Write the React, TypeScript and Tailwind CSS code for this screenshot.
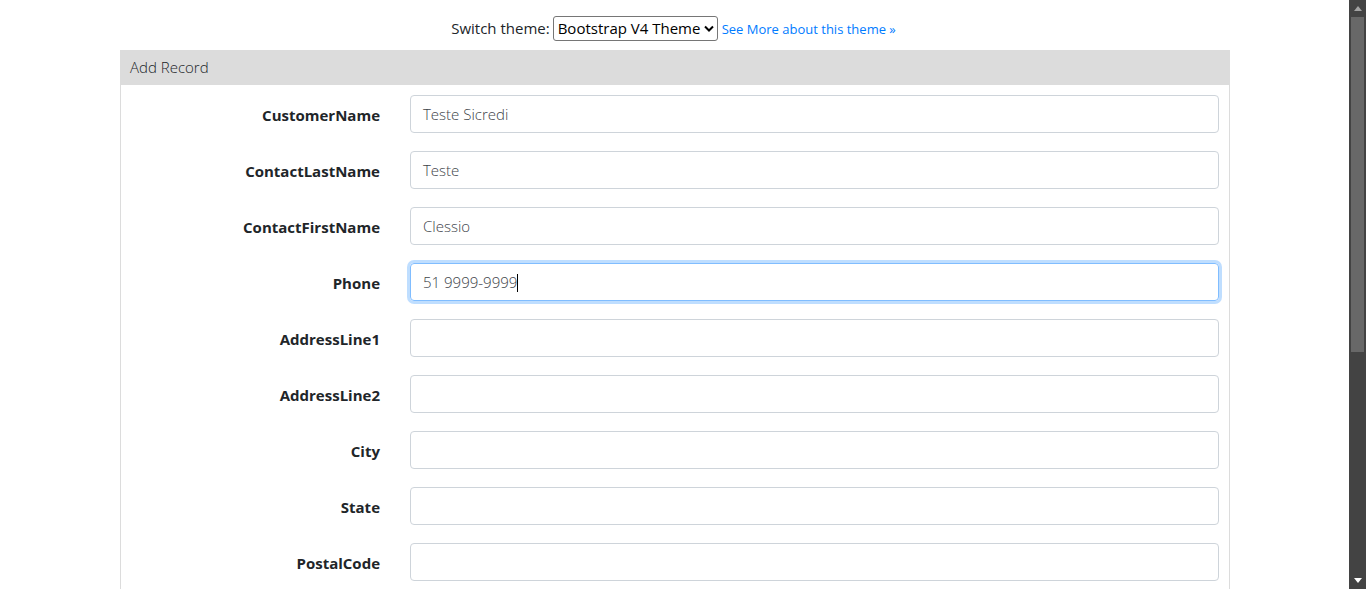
import React from 'react';

const fields = [
  { label: 'CustomerName', value: 'Teste Sicredi' },
  { label: 'ContactLastName', value: 'Teste' },
  { label: 'ContactFirstName', value: 'Clessio' },
  { label: 'Phone', value: '51 9999-9999', focused: true },
  { label: 'AddressLine1', value: '' },
  { label: 'AddressLine2', value: '' },
  { label: 'City', value: '' },
  { label: 'State', value: '' },
  { label: 'PostalCode', value: '' },
];

const App = () => {
  return (
    <div
      className="h-[589px] w-[1366px] flex overflow-hidden bg-white text-[#212529]"
      style={{ fontFamily: '"Open Sans", "Noto Sans", sans-serif' }}
    >
      <div className="flex-1 flex flex-col min-w-0">
        {/* Theme switcher */}
        <div className="h-[50px] shrink-0 flex items-center justify-center text-[15px] pt-[6px] pr-[2px]">
          <span className="text-[#212529] mr-[3px]">Switch theme:</span>
          <div className="h-[25px] w-[165px] border border-[#767676] rounded-[3px] flex items-center justify-between pl-[4px] pr-[3px] text-[15px] text-black">
            <span>Bootstrap V4 Theme</span>
            <svg width="10" height="7" viewBox="0 0 10 7">
              <path d="M1 1.5 L5 5.5 L9 1.5" stroke="#000" strokeWidth="2" fill="none" />
            </svg>
          </div>
          <a className="text-[#007bff] text-[13px] ml-[4px] pt-[3px]">See More about this theme »</a>
        </div>

        {/* Panel */}
        <div className="ml-[120px] w-[1110px] border-x border-[#dcdcdc] flex-1 shrink-0">
          <div className="h-[35px] bg-[#dcdcdc] flex items-center px-[9px] text-[15px] font-light text-[#212529]">
            Add Record
          </div>
          <div className="pt-[10px] flex flex-col gap-[18px]">
            {fields.map((f) => (
              <div key={f.label} className="flex items-center">
                <label className="w-[259px] text-right text-[15px] font-bold pt-[2px]">{f.label}</label>
                <div
                  className={
                    f.focused
                      ? 'ml-[30px] w-[809px] h-[38px] rounded-[4px] border border-[#80bdff] shadow-[0_0_0_3px_rgba(0,123,255,0.25)] flex items-center px-[12px] pt-[1px] text-[15px] font-light text-[#3d4349]'
                      : 'ml-[30px] w-[809px] h-[38px] rounded-[4px] border border-[#ced4da] flex items-center px-[12px] pt-[1px] text-[15px] font-light text-[#3d4349]'
                  }
                >
                  {f.value}
                  {f.focused && <span className="inline-block w-[1px] h-[18px] bg-black" />}
                </div>
              </div>
            ))}
          </div>
        </div>
      </div>

      {/* Scrollbar */}
      <div className="w-[17px] h-full shrink-0 bg-[#434343] flex flex-col items-center">
        <div className="h-[17px] flex items-center justify-center">
          <svg width="8" height="5" viewBox="0 0 8 5">
            <path d="M0 5 L4 0 L8 5 Z" fill="#a3a3a3" />
          </svg>
        </div>
        <div className="w-[13px] h-[335px] bg-[#686868]" />
        <div className="flex-1" />
        <div className="h-[17px] flex items-center justify-center">
          <svg width="8" height="5" viewBox="0 0 8 5">
            <path d="M0 0 L8 0 L4 5 Z" fill="#ffffff" />
          </svg>
        </div>
      </div>
    </div>
  );
};

export default App;
